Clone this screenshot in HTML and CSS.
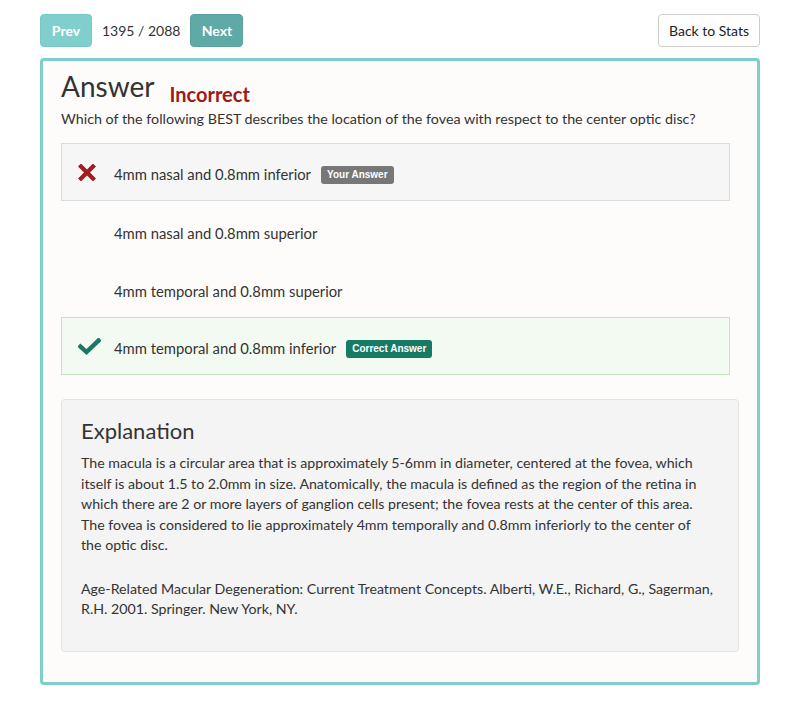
FILE: index.html
```html
<!DOCTYPE html>
<html>
<head>
<meta charset="utf-8">
<link rel="stylesheet" href="styles.css">
</head>
<body>
<div class="page">
  <div class="toolbar">
    <div class="nav">
      <button class="btn btn-prev">Prev</button>
      <span class="counter">1395 / 2088</span>
      <button class="btn btn-next">Next</button>
    </div>
    <button class="btn btn-back">Back to Stats</button>
  </div>
  <div class="card">
    <div class="heading">
      <h1 class="title">Answer</h1>
      <span class="status">Incorrect</span>
    </div>
    <p class="question">Which of the following BEST describes the location of the fovea with respect to the center optic disc?</p>
    <ul class="options">
      <li class="option option-wrong">
        <span class="icon"><svg width="18" height="17" viewBox="0 0 18 17"><path d="M3 2.5 L15 14.5 M15 2.5 L3 14.5" stroke="#a01d1d" stroke-width="4.2" stroke-linecap="square"/></svg></span>
        <span class="text">4mm nasal and 0.8mm inferior</span>
        <span class="badge badge-grey">Your Answer</span>
      </li>
      <li class="option option-plain"><span class="icon"></span><span class="text">4mm nasal and 0.8mm superior</span></li>
      <li class="option option-plain"><span class="icon"></span><span class="text">4mm temporal and 0.8mm superior</span></li>
      <li class="option option-right">
        <span class="icon"><svg width="23" height="17" viewBox="0 0 23 17"><path d="M2.5 8.5 L8.5 14 L20.5 2.5" fill="none" stroke="#1b7765" stroke-width="4.4" stroke-linecap="square" stroke-linejoin="miter"/></svg></span>
        <span class="text">4mm temporal and 0.8mm inferior</span>
        <span class="badge badge-green">Correct Answer</span>
      </li>
    </ul>
    <div class="explanation">
      <h2 class="exp-title">Explanation</h2>
      <p class="exp-text exp-body">The macula is a circular area that is approximately 5-6mm in diameter, centered at the fovea, which itself is about 1.5 to 2.0mm in size. Anatomically, the macula is defined as the region of the retina in which there are 2 or more layers of ganglion cells present; the fovea rests at the center of this area. The fovea is considered to lie approximately 4mm temporally and 0.8mm inferiorly to the center of the optic disc.</p>
      <p class="exp-text">Age-Related Macular Degeneration: Current Treatment Concepts. Alberti, W.E., Richard, G., Sagerman, R.H. 2001. Springer. New York, NY.</p>
    </div>
  </div>
</div>
</body>
</html>
```

FILE: styles.css
```css
* { box-sizing: border-box; }
body {
  margin: 0;
  background: #ffffff;
  font-family: Lato, "Open Sans", sans-serif;
  color: #333;
}
.page {
  padding: 14px 40px 0 40px;
}
.toolbar {
  display: flex;
  justify-content: space-between;
  align-items: center;
  height: 33px;
}
.nav {
  display: flex;
  align-items: center;
}
.btn {
  font-family: Lato, sans-serif;
  height: 33px;
  border-radius: 4px;
  font-size: 14px;
  padding: 0 12px;
  cursor: pointer;
}
.btn-prev {
  background: #80cfcc;
  border: 1px solid #78c8c5;
  color: #fff;
  font-weight: 700;
  width: 52px;
  padding: 0;
}
.btn-next {
  background: #5fa9a6;
  border: 1px solid #58a29f;
  color: #fff;
  font-weight: 700;
  width: 53px;
  padding: 0;
}
.counter {
  font-size: 14px;
  margin: 0 10px;
  color: #333;
}
.btn-back {
  background: #fff;
  border: 1px solid #ccc;
  color: #222;
  width: 102px;
  padding: 0;
}
.card {
  margin-top: 11px;
  border: 3px solid #7ecfcc;
  border-radius: 4px;
  background: #fdfcfa;
  padding: 7px 18px 30px 18px;
}
.heading {
  display: flex;
  align-items: baseline;
}
.title {
  margin: 0;
  font-size: 28px;
  font-weight: 400;
  color: #333;
  line-height: 36px;
}
.status {
  margin-left: 15px;
  color: #9b1b1b;
  font-weight: 700;
  font-size: 20px;
  position: relative;
  top: 5px;
}
.question {
  margin: 5px 0 0 0;
  font-size: 14.3px;
  line-height: 20px;
}
.options {
  list-style: none;
  margin: 14px 9px 0 0;
  padding: 0;
}
.option {
  display: flex;
  align-items: center;
  height: 58px;
  border: 1px solid transparent;
  padding-left: 16px;
  padding-top: 4px;
  font-size: 14.8px;
}
.option-plain {
  padding-top: 6px;
}
.option-wrong {
  background: #f6f6f6;
  border-color: #dcdcdc;
}
.option-right {
  background: #f3faf2;
  border-color: #c2e5bd;
}
.icon {
  width: 36px;
  display: inline-flex;
  align-items: center;
  position: relative;
  top: -2px;
}
.text {
  color: #333;
}
.badge {
  margin-left: 10px;
  font-family: "Liberation Sans", Arial, sans-serif;
  font-weight: 700;
  font-size: 10px;
  color: #fff;
  padding: 3px 6px;
  border-radius: 3px;
  line-height: 12px;
  position: relative;
  top: 1px;
}
.badge-grey { background: #777; }
.badge-green { background: #177a64; }
.explanation {
  margin-top: 24px;
  background: #f4f4f4;
  border: 1px solid #e3e3e3;
  border-radius: 4px;
  padding: 17px 19px 31px 19px;
}
.exp-title {
  margin: 0 0 8px 0;
  font-size: 22px;
  font-weight: 400;
  color: #333;
  line-height: 28px;
}
.exp-text {
  margin: 0 0 23px 0;
  font-size: 14.2px;
  line-height: 20.5px;
}
.exp-body {
  margin-right: 10px;
}
.exp-text:last-child { margin-bottom: 0; }
```
